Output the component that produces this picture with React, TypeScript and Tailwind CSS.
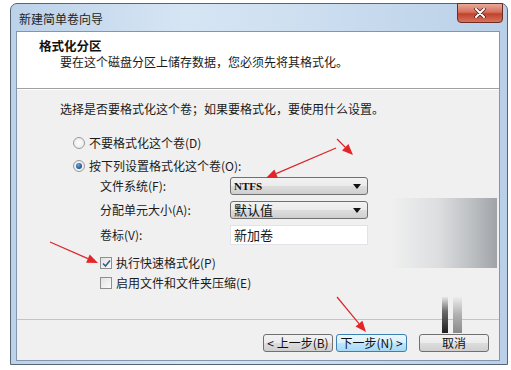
import React from "react";

const cjk = "font-['Noto_Sans_CJK_SC','Noto_Sans',sans-serif]";

function Arrow({ x1, y1, x2, y2 }: { x1: number; y1: number; x2: number; y2: number }) {
  const dx = x2 - x1;
  const dy = y2 - y1;
  const len = Math.hypot(dx, dy);
  const ux = dx / len;
  const uy = dy / len;
  const hl = 11;
  const hw = 4.5;
  const bx = x2 - ux * hl;
  const by = y2 - uy * hl;
  const pts = `${x2},${y2} ${bx - uy * hw},${by + ux * hw} ${bx + uy * hw},${by - ux * hw}`;
  return (
    <g>
      <line x1={x1} y1={y1} x2={bx} y2={by} stroke="#d9262b" strokeWidth={1.2} />
      <polygon points={pts} fill="#e3252a" />
    </g>
  );
}

function Radio({ checked }: { checked?: boolean }) {
  return (
    <span className="relative flex h-[12px] w-[12px] items-center justify-center rounded-full border border-[#9a9a9a] bg-[radial-gradient(circle,#ffffff_0%,#e4e4e4_100%)]">
      {checked && (
        <span className="h-[6px] w-[6px] rounded-full bg-[radial-gradient(circle_at_40%_35%,#6fa8dc_0%,#1d4f8a_70%)]" />
      )}
    </span>
  );
}

function Check({ checked }: { checked?: boolean }) {
  return (
    <span className="flex h-[12px] w-[12px] items-center justify-center border border-[#8e8f8f] bg-[linear-gradient(135deg,#e2e2e2,#fbfbfb)]">
      {checked && (
        <svg width="9" height="9" viewBox="0 0 9 9">
          <path d="M1 4.5 L3.5 7 L8 1.5" fill="none" stroke="#3d5a8c" strokeWidth="1.6" />
        </svg>
      )}
    </span>
  );
}

function Combo({ children, mono }: { children: React.ReactNode; mono?: boolean }) {
  return (
    <div className="flex h-[18px] w-[138px] items-center justify-between rounded-[3px] border border-[#707070] bg-[linear-gradient(#f2f2f2,#ebebeb_50%,#dddddd_51%,#cfcfcf)] pl-[3px] pr-[6px]">
      <span
        className={
          mono
            ? "font-['Liberation_Serif',serif] text-[11px] font-bold text-[#111]"
            : "text-[13px] leading-[16px] text-[#111]"
        }
      >
        {children}
      </span>
      <svg width="8" height="5" viewBox="0 0 8 5">
        <path d="M0 0 H8 L4 5 Z" fill="#111" />
      </svg>
    </div>
  );
}

function Btn({ children, w, hot }: { children: React.ReactNode; w: string; hot?: boolean }) {
  return (
    <div
      className={
        (hot
          ? "border-[#3c7fb1] bg-[linear-gradient(#eaf6fd,#d9f0fc_50%,#bee6fd_51%,#a7d9f5)] "
          : "border-[#707070] bg-[linear-gradient(#f2f2f2,#ebebeb_50%,#dddddd_51%,#cfcfcf)] ") +
        w +
        " flex h-[18px] items-center justify-center rounded-[3px] border text-[12px] leading-[14px] text-[#111]"
      }
    >
      {children}
    </div>
  );
}

export default function App() {
  return (
    <div className={`relative h-[370px] w-[511px] overflow-hidden bg-white ${cjk}`}>
      <div className="pl-[10px] pt-[3px]">
        <div className="flex h-[362px] w-[498px] flex-col rounded-t-[7px] border border-[#56657a] bg-[linear-gradient(90deg,#bcd2e9_0%,#d6e5f4_35%,#cfe0f1_55%,#bad0e8_100%)] pb-[3px] pl-[5px] pr-[7px]">
          <div className="flex h-[27px] items-start justify-between">
            <div className="pl-[3px] pt-[7px] text-[12px] leading-[16px] text-[#1e1e1e]">新建简单卷向导</div>
            <div className="mr-[-3px] mt-[-1px] flex h-[20px] w-[46px] items-center justify-center rounded-b-[4px] border border-[#6b2d24] bg-[linear-gradient(#e9a999,#d6705c_45%,#c0432c_55%,#d8725e)]">
              <svg width="12" height="10" viewBox="0 0 12 10">
                <path d="M2 1 L10 9 M10 1 L2 9" stroke="#4a1a12" strokeWidth="3.4" strokeLinecap="round" />
                <path d="M2 1 L10 9 M10 1 L2 9" stroke="#ffffff" strokeWidth="2" strokeLinecap="round" />
              </svg>
            </div>
          </div>

          <div className="flex flex-1 flex-col border border-[#8396ab]">
            <div className="h-[57px] border-b border-[#a0a0a0] bg-white pl-[22px] pt-[6px]">
              <div className="text-[12.5px] font-bold leading-[15px] text-[#111]">格式化分区</div>
              <div className="pl-[21px] pt-[1px] text-[12px] leading-[15px] text-[#1a1a1a]">
                要在这个磁盘分区上储存数据，您必须先将其格式化。
              </div>
            </div>

            <div className="flex flex-1 flex-col border-t border-white bg-[#f0f0f0]">
              <div className="flex-1 pl-[43px] pt-[11px] text-[12px] leading-[16px] text-[#1a1a1a]">
                <div>选择是否要格式化这个卷；如果要格式化，要使用什么设置。</div>

                <div className="ml-[13px] mt-[18px] flex h-[16px] items-center gap-[4px]">
                  <Radio />
                  <span>不要格式化这个卷(D)</span>
                </div>
                <div className="ml-[13px] mt-[7px] flex h-[16px] items-center gap-[4px]">
                  <Radio checked />
                  <span>按下列设置格式化这个卷(O):</span>
                </div>

                <div className="ml-[40px] mt-[3px] grid grid-cols-[130px_138px] items-center gap-y-[6px]">
                  <span>文件系统(F):</span>
                  <Combo mono>NTFS</Combo>
                  <span>分配单元大小(A):</span>
                  <Combo>默认值</Combo>
                  <span>卷标(V):</span>
                  <div className="flex h-[20px] items-center border border-[#e2e3ea] bg-white pl-[3px] text-[13px]">新加卷</div>
                </div>

                <div className="ml-[40px] mt-[10px] flex h-[16px] items-center gap-[4px]">
                  <Check checked />
                  <span>执行快速格式化(P)</span>
                </div>
                <div className="ml-[40px] mt-[4px] flex h-[16px] items-center gap-[4px]">
                  <Check />
                  <span>启用文件和文件夹压缩(E)</span>
                </div>
              </div>

              <div className="h-[41px] border-t border-[#c4c4c4]">
                <div className="flex justify-end pr-[10px] pt-[14px]">
                  <Btn w="w-[70px]">&lt; 上一步(B)</Btn>
                  <div className="w-[3px]" />
                  <Btn w="w-[71px]" hot>下一步(N) &gt;</Btn>
                  <div className="w-[12px]" />
                  <Btn w="w-[70px]">取消</Btn>
                </div>
              </div>
            </div>
          </div>
        </div>
      </div>

      {/* leftover watermark smudges */}
      <div className="absolute left-[390px] top-[198px] h-[70px] w-[107px] bg-[linear-gradient(90deg,#f0f0f0_0%,#dcdee0_45%,#b9bcbf_80%,#9fa3a7_100%)]" />
      <div className="absolute left-[442px] top-[297px] h-[36px] w-[6px] bg-[linear-gradient(#e6e6e6,#6a6a6a_40%,#1e1e1e)]" />
      <div className="absolute left-[453px] top-[297px] h-[36px] w-[9px] bg-[linear-gradient(#ececec,#b0b0b0_50%,#8a8a8a)]" />

      <svg className="pointer-events-none absolute left-0 top-0" width="511" height="370">
        <Arrow x1={336} y1={148} x2={266} y2={178} />
        <Arrow x1={337} y1={139} x2={353} y2={155} />
        <Arrow x1={50} y1={242} x2={98} y2={263} />
        <Arrow x1={337} y1={297} x2={366} y2={332} />
      </svg>
    </div>
  );
}
